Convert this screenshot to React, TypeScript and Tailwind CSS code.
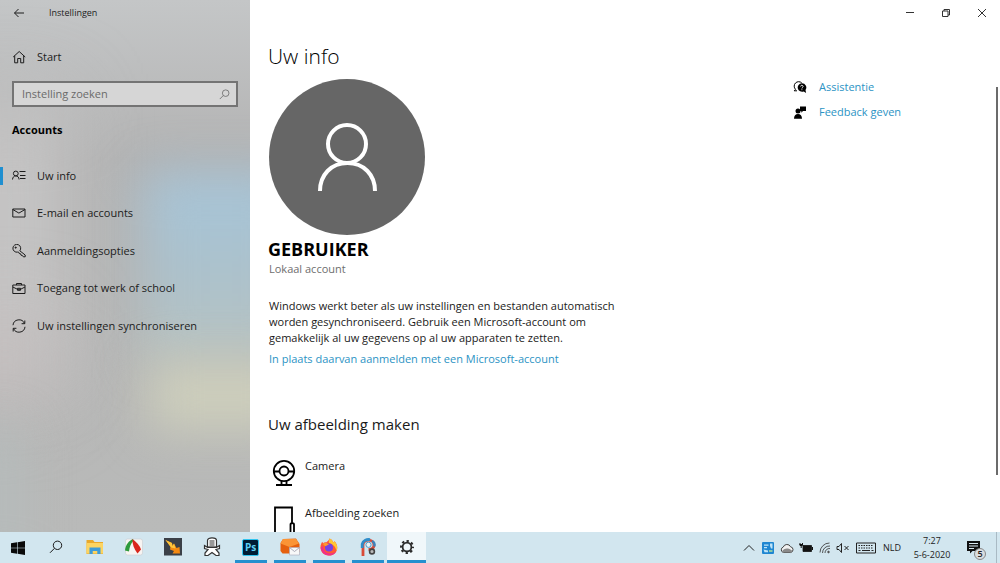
import type { ReactNode } from "react";

const stroke = { fill: "none", stroke: "currentColor", strokeWidth: 1 } as const;

const navItems: { label: string; active?: boolean; icon: ReactNode }[] = [
  {
    label: "Uw info",
    active: true,
    icon: (
      <svg viewBox="0 0 14 14" className="size-3.5" {...stroke}>
        <circle cx="3.8" cy="4.5" r="2.4" />
        <path d="M.5 10.500c.2-2.400 1.500-3.600 3.300-3.600s3.100 1.200 3.300 3.600M7.500 2.500h6M8 6.500h5.500M8 9.500h5.500" />
      </svg>
    ),
  },
  {
    label: "E-mail en accounts",
    icon: (
      <svg viewBox="0 0 14 14" className="size-3.5" {...stroke}>
        <path d="M.8 3h12.200v8H.8zM.8 3.500l6.100 3.600L13 3.500" />
      </svg>
    ),
  },
  {
    label: "Aanmeldingsopties",
    icon: (
      <svg viewBox="0 0 14 14" className="size-3.5" {...stroke}>
        <path d="M7.800 6.800A3.900 3.900 0 1 0 5.700 8.100l1 .1.500 1.300 1.400.3.400 1.400 1.400.3.900 1.300h1.900v-1.800z" />
        <circle cx="3.700" cy="3.600" r=".6" fill="currentColor" />
      </svg>
    ),
  },
  {
    label: "Toegang tot werk of school",
    icon: (
      <svg viewBox="0 0 14 14" className="size-3.5" {...stroke}>
        <path d="M.8 3h12.200v8.500H.8zM4.500 3V1.500h5V3M.8 5l4.700 2.300h3L13 5M5.500 6.300h3v2h-3z" />
      </svg>
    ),
  },
  {
    label: "Uw instellingen synchroniseren",
    icon: (
      <svg viewBox="0 0 14 14" className="size-3.5" {...stroke}>
        <path d="M1 6.200A6 6 0 0 1 12.500 4.500M13 7.800A6 6 0 0 1 1.500 9.500M12.800 1.500v3.200H9.600M1.200 12.500V9.300h3.200" />
      </svg>
    ),
  },
];

function SearchGlyph({ className }: { className: string }) {
  return (
    <svg viewBox="0 0 14 14" className={className} {...stroke}>
      <circle cx="8.500" cy="5.300" r="4.200" />
      <path d="M5.500 8.300 1 12.800" />
    </svg>
  );
}

function Sidebar() {
  return (
    <aside className="relative w-1/4 shrink-0 overflow-hidden bg-[#b3b3b3]">
      {/* acrylic backdrop */}
      <div className="absolute inset-0 bg-linear-to-b from-[#c4c6c7] via-transparent via-30% to-[#b9bab9]" />
      <div className="absolute top-[100px] -left-10 h-[270px] w-[100px] bg-[#c8c7c7] blur-2xl" />
      <div className="absolute top-[320px] -left-10 h-20 w-[90px] bg-[#c6bfbf] blur-2xl" />
      <div className="absolute top-[430px] -left-10 h-[140px] w-[60px] bg-[#b5bbbb] blur-xl" />
      <div className="absolute top-[172px] -right-12 h-[190px] w-[154px] bg-linear-to-b from-[#a5c5da] via-[#abc1cc] to-[#b8c3c1] blur-xl" />
      <div className="absolute top-[362px] -right-12 h-[68px] w-[150px] bg-[#cecfbc] blur-xl" />

      <div className="relative flex flex-col text-[#1c1c1c]">
        <div className="flex h-[26px] items-center">
          <button type="button" aria-label="Terug" className="flex w-[37px] justify-center">
            <svg viewBox="0 0 12 12" className="size-3" {...stroke}>
              <path d="M11 6H1.500M5.500 2l-4 4 4 4" />
            </svg>
          </button>
          <span className="ml-3 text-[9px]">Instellingen</span>
        </div>

        <a href="#start" className="mt-[19px] flex h-6 items-center pl-3">
          <svg viewBox="0 0 14 14" className="size-3.5" {...stroke}>
            <path d="M1.200 7 7.200 1.500 13.200 7M2.700 5.800v7h3V8.500h3v4.300h3v-7" />
          </svg>
          <span className="ml-[11px]">Start</span>
        </a>

        <label className="mx-3 mt-3 flex h-[26px] items-center border-2 border-[#747474] bg-[#d6d6d6] pr-1.5 pl-2 text-[#666]">
          <input
            type="search"
            aria-label="Instelling zoeken"
            placeholder="Instelling zoeken"
            className="min-w-0 flex-1 bg-transparent outline-none placeholder:text-[#6a6a6a]"
          />
          <SearchGlyph className="size-[11px] shrink-0" />
        </label>

        <h2 className="mt-[13px] pl-3 leading-5 font-bold text-black">Accounts</h2>

        <nav className="mt-[17px] grid h-[188px] grid-rows-5">
          {navItems.map((item) => (
            <a key={item.label} href="#" className="flex items-center">
              <span className={item.active ? "h-[18px] w-[3px] bg-[#1f8fd0]" : "w-[3px]"} />
              <span className="ml-[9px]">{item.icon}</span>
              <span className="ml-[11px]">{item.label}</span>
            </a>
          ))}
        </nav>
      </div>
    </aside>
  );
}

function WindowControls() {
  return (
    <div className="flex h-[26px] justify-end text-[#333]">
      <button type="button" aria-label="Minimaliseren" className="flex w-9 items-center justify-center">
        <svg viewBox="0 0 10 10" className="size-2.5" {...stroke}>
          <path d="M1 4.500h8" />
        </svg>
      </button>
      <button type="button" aria-label="Vorig formaat" className="flex w-9 items-center justify-center">
        <svg viewBox="0 0 10 10" className="size-2.5" {...stroke}>
          <path d="M1.500 3h5.500v5.500H1.500zM3 3V1.500h5.500V7H7" />
        </svg>
      </button>
      <button type="button" aria-label="Sluiten" className="flex w-9 items-center justify-center">
        <svg viewBox="0 0 10 10" className="size-2.5" {...stroke}>
          <path d="m1 1 8 8M9 1 1 9" />
        </svg>
      </button>
    </div>
  );
}

function Content() {
  return (
    <main className="flex min-w-0 flex-1 flex-col overflow-hidden bg-white">
      <WindowControls />
      <div className="flex min-h-0 flex-1 pl-[18px]">
        <div className="min-w-0 flex-1">
          <h1 className="mt-4 text-[21px] leading-7 font-light text-black">Uw info</h1>
          <svg viewBox="0 0 156 156" className="mt-[9px] ml-px size-[156px]" fill="none" stroke="#fff" strokeWidth="4">
            <circle cx="78" cy="78" r="78" fill="#666" stroke="none" />
            <circle cx="78" cy="65" r="19" />
            <path d="M51 112c0-16 11-28 27.500-28S106 96 106 112" />
          </svg>
          <p className="mt-[2px] text-[18px] leading-6 font-bold text-black">GEBRUIKER</p>
          <p className="ml-px leading-4 text-[#6e6e6e]">Lokaal account</p>
          <p className="mt-[21px] ml-px max-w-[360px] leading-4">
            Windows werkt beter als uw instellingen en bestanden automatisch worden gesynchroniseerd. Gebruik een
            Microsoft-account om gemakkelijk al uw gegevens op al uw apparaten te zetten.
          </p>
          <a href="#ms-account" className="mt-[5px] ml-px block leading-4 text-[#2b93c4]">
            In plaats daarvan aanmelden met een Microsoft-account
          </a>
          <h2 className="mt-[45px] text-[15px] leading-6">Uw afbeelding maken</h2>
          <button type="button" className="mt-[22px] flex w-full gap-[9px] pl-1 text-left leading-4">
            <svg viewBox="0 0 24 28" className="mt-px h-7 w-6" fill="none" stroke="#000" strokeWidth="1.800">
              <circle cx="12" cy="12" r="10.200" />
              <circle cx="12" cy="12" r="4.500" />
              <path d="M1.800 12.500h5.700M16.500 12.500h5.700M9.500 21.500v4M14.500 21.500v4M4 26h16" />
            </svg>
            <span>Camera</span>
          </button>
          <button type="button" className="mt-[18px] flex w-full gap-[9px] pl-1 text-left leading-4">
            <svg viewBox="0 0 24 28" className="mt-px h-7 w-6" fill="none" stroke="#000" strokeWidth="1.800">
              <path d="M20 17V1.500H3V27M18.500 27V18.500c0-1.800 3.500-1.800 3.500 0V27" />
            </svg>
            <span>Afbeelding zoeken</span>
          </button>
        </div>

        <div className="w-[203px] shrink-0 pt-[49px] text-[#2b93c4]">
          <a href="#assistentie" className="flex h-[25px] items-center">
            <svg viewBox="0 0 14 14" className="size-3.5 text-black">
              <path d="M2.500 8.300A4.200 4.200 0 1 1 8.800 2M2.500 8.300l-1.300 1.500h2.800" {...stroke} />
              <path d="M8.800 2.200a4.300 4.300 0 1 0 2 8.200l2.300 1.600-.6-3A4.300 4.300 0 0 0 8.800 2.200z" fill="currentColor" />
              <path d="M7.600 5.500c0-1.700 2.500-1.600 2.500 0 0 .9-1.200.9-1.200 2M8.900 8.300v.9" fill="none" stroke="#fff" strokeWidth=".9" />
            </svg>
            <span className="ml-3">Assistentie</span>
          </a>
          <a href="#feedback" className="flex h-[25px] items-center">
            <svg viewBox="0 0 14 14" className="size-3.5 text-black" fill="currentColor">
              <circle cx="5" cy="5" r="2.500" />
              <path d="M1 12.800C1 10 2.500 8 5 8s4 2 4 4.800zM7 .5h6V5h-3L8.300 6.700V5H7z" />
            </svg>
            <span className="ml-3">Feedback geven</span>
          </a>
        </div>
        <div className="mt-[61px] w-1 shrink-0">
          <div className="h-[388px] w-0.5 bg-[#6b6b6b]" />
        </div>
      </div>
    </main>
  );
}

const apps: { name: string; running?: boolean; active?: boolean; icon: ReactNode }[] = [
  {
    name: "Zoeken",
    icon: <SearchGlyph className="size-3.5" />,
  },
  {
    name: "Verkenner",
    icon: (
      <svg viewBox="0 0 18 18" className="size-[18px]">
        <path d="M.5 2h6.500l1.500 2H17v12H.5z" fill="#e9a92c" />
        <path d="M.5 5H17v10.500H.5z" fill="#fcd462" />
        <path d="M3.500 16V9.500h11V16h-3.200v-3H6.700v3z" fill="#3d9bd8" />
      </svg>
    ),
  },
  {
    name: "FastStone",
    icon: (
      <svg viewBox="0 0 18 18" className="size-[18px]">
        <rect x=".5" y="1" width="17" height="16" rx="2" fill="#f7f4f2" stroke="#c9cdd0" strokeWidth=".6" />
        <path d="M8 1C4 2.500.5 7 0 12.500L4 13.500C4.500 9 6 5 8.500 3z" fill="#2e9a3c" />
        <path d="M7.500 1c-.3 5 1.500 10 5 14.500l3.500-4C15 8 11.500 4 7.500 1z" fill="#d9261c" />
      </svg>
    ),
  },
  {
    name: "Winamp",
    icon: (
      <svg viewBox="0 0 18 18" className="size-[18px]">
        <rect width="18" height="17.500" fill="#3b4048" />
        <path d="m1.500 2 6.500 3 .5 3 1.500-2.500 2.500 4.500 3-1 .5 6.500H8.500l1.500-2.500-4-1.500.5-3z" fill="#f58a12" />
        <path d="m1.500 2 6.500 3 .5 3 1.500-2.500 1.500 5-4.500-1z" fill="#ffc53b" />
      </svg>
    ),
  },
  {
    name: "Spraakrecorder",
    icon: (
      <svg viewBox="0 0 18 20" className="h-5 w-[18px]" fill="#fff" stroke="#333" strokeWidth="1.200">
        <path d="M4.500 10V3.500C4.500 0 13.500 0 13.500 3.500V10z" />
        <path d="M6.500 4h5M6.500 6h5M6.500 8h5" />
        <path d="M1.500 8.500v3l3.500 1-3 3.500v2.500h3l4-3 4 3h3V16l-3-3.500 3.500-1v-3l-3 1.800h-9z" />
      </svg>
    ),
  },
  {
    name: "Photoshop",
    running: true,
    icon: (
      <span className="flex size-[17px] items-center justify-center rounded-xs border border-[#31c5f0] bg-[#001d34] text-[10px] leading-none font-bold text-[#5fd0f5]">
        Ps
      </span>
    ),
  },
  {
    name: "E-mail",
    running: true,
    icon: (
      <svg viewBox="0 0 20 18" className="h-[18px] w-5">
        <path d="m3 1 13-.5L19.500 6v8l-3 1.500H2.500L.5 13V5z" fill="#e5600f" />
        <path d="m.5 5.500 9 3.500 9.500-3.500L16 1H3z" fill="#fb9436" />
        <path d="M9.500 9.500h10v7.500h-10z" fill="#f8f8f8" stroke="#aab" strokeWidth=".6" />
        <path d="m9.500 9.500 5 4 5-4" fill="none" stroke="#99a" strokeWidth=".8" />
      </svg>
    ),
  },
  {
    name: "Firefox",
    running: true,
    icon: (
      <svg viewBox="0 0 18 18" className="size-[18px]">
        <path d="M9.500.5c3 1.500 3.500 3 4 4 .8-.3.8-1 .8-1.500 6 6 2.300 14.500-5.300 14.500C3.500 17.500.5 13.500.5 9c0-2 .8-4 1.800-5.300l.7 1.500c1-1 2.300-1.200 3.500-.9C8 3 9 2 9.500.5z" fill="#ff5a36" />
        <path d="M9.500.5c3 1.500 3.500 3 4 4 .8-.3.8-1 .8-1.500 3 3 3.500 7 2.200 10-.8-4-3-6.500-7.500-8C8.500 3.500 9 2 9.500.5z" fill="#ffc832" />
        <path d="M.6 9.500c.5 5 4 8 8.400 8 3 0 6-1.500 7.200-4-3 2.500-8.500 3-11.500-.5C3.500 11.500 3 9.500 3 8z" fill="#f0318a" />
        <circle cx="9" cy="9.500" r="4" fill="#7542e5" />
        <path d="M3 5.500c2-1 4.500-.5 6 1.300-1.500.2-2.500.5-2.800 1.500-1.400 0-2.700-1-3.200-2.800z" fill="#ff9a2e" />
      </svg>
    ),
  },
  {
    name: "PhotoScape",
    running: true,
    icon: (
      <svg viewBox="0 0 18 18" className="size-[18px]" fill="none">
        <path d="M4 18V7c0-6.500 11-6.500 11 0 0 3-2.500 4.500-5.500 4.500" stroke="#d84a38" strokeWidth="2.800" />
        <path d="M3.200 10V6C4 2.300 8 1 11 1.700" stroke="#2e8dca" strokeWidth="2.800" />
        <path d="M13 3c2 1 3 3 2.300 5.500" stroke="#3a84be" strokeWidth="2.400" />
        <circle cx="9.500" cy="6.800" r="2.600" fill="#e9f2f7" stroke="#4a9bc9" />
        <circle cx="13" cy="13.500" r="2.400" fill="#bbb" stroke="#444" strokeWidth="1.600" />
      </svg>
    ),
  },
  {
    name: "Instellingen",
    running: true,
    active: true,
    icon: (
      <svg viewBox="0 0 16 16" className="size-4" fill="none" stroke="#2b2b2b">
        <circle cx="8" cy="8" r="4.400" strokeWidth="1.800" />
        <circle cx="8" cy="8" r="6" strokeWidth="2" strokeDasharray="2.350 2.362" strokeDashoffset="1.175" />
      </svg>
    ),
  },
];

function Tray() {
  return (
    <div className="flex items-center text-[#222]">
      <svg viewBox="0 0 12 12" className="size-3" {...stroke}>
        <path d="m1 8.500 5-5 5 5" />
      </svg>
      <svg viewBox="0 0 12 12" className="ml-[7px] size-3">
        <rect width="12" height="12" rx="1" fill="#1f86d1" />
        <path d="M2 2.500h4.500v1.200H2zM2 5h3v1.200H2zM8 1.500h2.500v5H9L8 4zM1.500 7.500 6 8.500v1.800H2.500z" fill="#bfe3f7" />
        <path d="M7 8h3.500v2H7z" fill="#8cc9a8" />
      </svg>
      <svg viewBox="0 0 14 12" className="ml-1.5 h-3 w-3.5">
        <path d="M3.500 10.500a2.800 2.800 0 0 1-.3-5.400 4 4 0 0 1 7.400-.3 2.900 2.900 0 0 1 .1 5.700z" fill="#f1f1f1" stroke="#444" />
        <path d="M2 9.500C3 7 6 6 8 6.500s4 1.500 4.500 3l-1.500 1H3.500z" fill="#8a8a8a" />
      </svg>
      <svg viewBox="0 0 14 12" className="ml-[5px] h-3 w-3.5">
        <path d="M4 3.500h8.500v6H4z" fill="#111" stroke="#111" strokeWidth=".8" />
        <path d="M13.500 5v3M.5 2.500h3.500M1 1v2.500h2.500V1M2.200 3.500V6" fill="none" stroke="#111" />
      </svg>
      <svg viewBox="0 0 12 12" className="ml-1.5 size-3" fill="none" stroke="#444" strokeWidth=".9">
        <path d="M1 10.500A9.500 9.500 0 0 1 10.500 1M3.500 11A7 7 0 0 1 11 4M6 11a4.500 4.500 0 0 1 5-4.500" />
        <circle cx="9.500" cy="10" r=".8" fill="#444" />
      </svg>
      <svg viewBox="0 0 14 12" className="ml-[5px] h-3 w-3.5" {...stroke}>
        <path d="M1 4.500h2l2.500-3v9L3 7.500H1zM8.500 4l4 4M12.500 4l-4 4" />
      </svg>
      <svg viewBox="0 0 20 12" className="ml-1.5 h-3 w-5" {...stroke}>
        <path d="M.5 1h19v10H.5z" />
        <path d="M2.500 3.500h15M2.500 6h15" strokeDasharray="1.500 1" />
        <path d="M2.500 8.500h2M6 8.500h8M15.500 8.500h2" />
      </svg>
      <span className="ml-[7px] text-[9px]">NLD</span>
      <time className="ml-[11px] flex w-10 flex-col items-center text-[9px] leading-[14px] whitespace-nowrap">
        <span>7:27</span>
        <span>5-6-2020</span>
      </time>
      <button type="button" aria-label="Meldingen" className="relative mr-2.5 ml-3.5 h-5 w-5">
        <svg viewBox="0 0 20 20" className="size-5">
          <path d="M1 3h13v10H6.500L4 15.500V13H1z" fill="#111" />
          <path d="M3 5.500h9M3 8h9M3 10.500h5" stroke="#dbeaf2" />
        </svg>
        <span className="absolute right-0 -bottom-0.5 flex size-3 items-center justify-center rounded-full border border-[#888] bg-[#d9dde0] text-[9px] leading-none font-semibold">
          5
        </span>
      </button>
      <span className="h-full w-1 border-l border-[#a9bac4]" />
    </div>
  );
}

function Taskbar() {
  return (
    <footer className="flex h-[31px] shrink-0 justify-between bg-[#d2e6ef]">
      <div className="flex">
        <button type="button" aria-label="Start" className="flex w-9 items-center justify-center">
          <svg viewBox="0 0 14 14" className="size-3.5" fill="#0a0a0a">
            <path d="m0 2.200 6-.9v5.400H0zM6.600 1.200 14 0v6.700H6.600zM0 7.300h6v5.400l-6-.9zM6.600 7.300H14V14l-7.400-1.200z" />
          </svg>
        </button>
        {apps.map((app) => (
          <button
            key={app.name}
            type="button"
            aria-label={app.name}
            className={`flex w-[39px] flex-col items-center ${app.active ? "bg-[#f0f7fa]" : ""}`}
          >
            <span className="flex flex-1 items-center pt-[2px]">{app.icon}</span>
            <span
              className={`h-[3px] ${app.running ? "bg-[#2590cf]" : ""} ${app.active ? "w-full" : "w-8"}`}
            />
          </button>
        ))}
      </div>
      <Tray />
    </footer>
  );
}

export default function App() {
  return (
    <div className="flex h-screen flex-col overflow-hidden font-['Open_Sans','Noto_Sans',sans-serif] text-[11px] text-[#1a1a1a]">
      <div className="flex min-h-0 flex-1">
        <Sidebar />
        <Content />
      </div>
      <Taskbar />
    </div>
  );
}
